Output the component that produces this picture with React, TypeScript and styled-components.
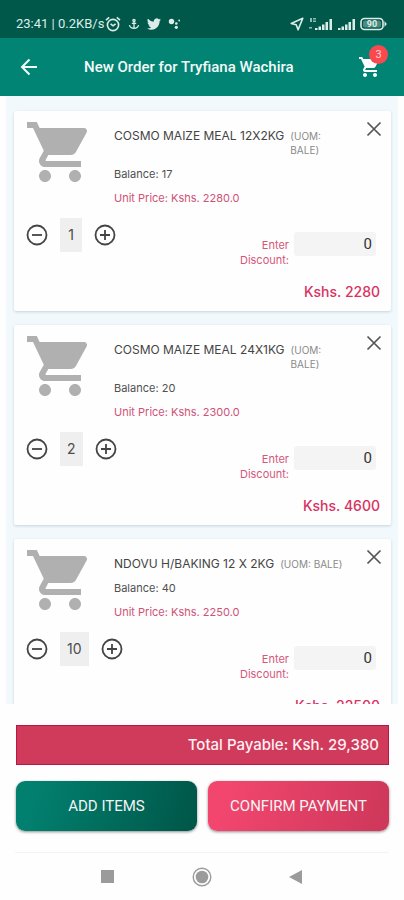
import React, { useState } from "react";
import styled, { createGlobalStyle } from "styled-components";

const GlobalStyle = createGlobalStyle`
  * { box-sizing: border-box; }
  body { margin: 0; background: #fff; font-family: Inter, "Liberation Sans", sans-serif; }
  button, input { font: inherit; }
`;

const Screen = styled.div`
  display: flex;
  flex-direction: column;
  height: 100vh;
  background: #fefefe;
`;

const StatusBar = styled.div`
  display: flex;
  align-items: center;
  justify-content: space-between;
  flex: none;
  height: 38px;
  padding: 10px 17px 0 16px;
  background: #00584a;
  color: #dcece9;
  font-family: Roboto, sans-serif;
  font-size: 13px;
  line-height: 16px;
`;

const StatusGroup = styled.div<{ $gap: number }>`
  display: flex;
  align-items: center;
  gap: ${(p) => p.$gap}px;
  white-space: nowrap;
`;

const AppBar = styled.header`
  display: flex;
  align-items: center;
  flex: none;
  height: 58px;
  padding: 0 20px;
  background: #028475;
  color: #f2faf8;
`;

const IconButton = styled.button<{ $color: string }>`
  display: flex;
  align-items: center;
  justify-content: center;
  flex: none;
  padding: 0;
  border: 0;
  background: none;
  color: ${(p) => p.$color};
  cursor: pointer;
`;

const Heading = styled.h1`
  flex: 1;
  margin: 0 0 0 46px;
  font-family: Roboto, sans-serif;
  font-size: 15px;
  font-weight: 500;
  line-height: 20px;
`;

const CartButton = styled(IconButton)`
  position: relative;
  margin-right: 2px;
`;

const Badge = styled.span`
  position: absolute;
  top: -10px;
  right: -6px;
  width: 19px;
  height: 19px;
  border-radius: 50%;
  background: #f9494f;
  color: #ffd5d5;
  font-family: Roboto, sans-serif;
  font-size: 11px;
  line-height: 19px;
  text-align: center;
`;

const OrderList = styled.main`
  display: flex;
  flex-direction: column;
  gap: 14px;
  flex: 1;
  min-height: 0;
  margin: 0 6px;
  padding: 15px 7px 0 8px;
  overflow-y: auto;
  scrollbar-width: none;
  background: #f2f9fd;
`;

const Card = styled.article`
  flex: none;
  padding: 5px 9px 10px 10px;
  border-radius: 2px;
  background: #fefefe;
  box-shadow: 0 1px 3px #c5d3da;
`;

const CardTop = styled.div`
  display: flex;
  align-items: flex-start;
`;

const Details = styled.div`
  display: flex;
  flex-direction: column;
  flex: 1;
  gap: 10px;
  min-width: 0;
  margin: 0 16px 0 18px;
  padding-top: 13px;
  font-size: 11px;
  line-height: 14px;
`;

const NameRow = styled.div`
  display: flex;
  gap: 6px;
`;

const ProductName = styled.h2`
  margin: 0;
  color: #444;
  font-size: 12px;
  font-weight: 400;
  white-space: nowrap;
`;

const Unit = styled.span`
  color: #8a8a8a;
  font-size: 10px;
`;

const Detail = styled.div<{ $color: string }>`
  color: ${(p) => p.$color};
`;

const RemoveButton = styled(IconButton)`
  margin-top: 5px;
`;

const CardControls = styled.div`
  display: flex;
  align-items: flex-start;
  justify-content: space-between;
  margin-top: 13px;
  padding: 0 6px 0 2px;
`;

const Stepper = styled.div`
  display: flex;
  align-items: center;
  gap: 12px;
`;

const Quantity = styled.output`
  min-width: 22px;
  padding: 0 7px;
  background: #efefef;
  color: #4c4c4c;
  font-size: 14px;
  line-height: 34px;
  text-align: center;
`;

const Discount = styled.label`
  display: flex;
  align-items: flex-start;
  gap: 5px;
  margin-top: 14px;
  color: #d5577c;
  font-size: 11px;
  line-height: 15px;
  text-align: right;
`;

const DiscountText = styled.span`
  width: min-content;
  padding-top: 6px;
`;

const DiscountInput = styled.input`
  width: 82px;
  height: 24px;
  padding: 0 4px;
  border: 0;
  border-radius: 3px;
  background: #f4f4f4;
  color: #333;
  font-family: Roboto, sans-serif;
  font-size: 15px;
  text-align: right;
`;

const Subtotal = styled.div`
  margin-top: 15px;
  padding-right: 2px;
  color: #d8325f;
  font-size: 14px;
  font-weight: 500;
  line-height: 18px;
  text-align: right;
`;

const Footer = styled.footer`
  flex: none;
  padding: 21px 15px 21px 16px;
`;

const Total = styled.div`
  padding: 0 9px;
  border: 1px solid #b91549;
  background: #d03a5b;
  color: #fff0f3;
  font-size: 15px;
  font-weight: 500;
  line-height: 38px;
  text-align: right;
`;

const Actions = styled.div`
  display: grid;
  grid-template-columns: 1fr 1fr;
  gap: 11px;
  margin-top: 16px;
`;

const ActionButton = styled.button<{ $from: string; $to: string }>`
  height: 50px;
  padding: 0;
  border: 0;
  border-radius: 9px;
  background: linear-gradient(105deg, ${(p) => p.$from} 10%, ${(p) => p.$to} 95%);
  box-shadow: 0 1px 3px #8c8c8c;
  color: #f4f4f4;
  font-family: Roboto, sans-serif;
  font-size: 15px;
  cursor: pointer;
`;

const SystemNav = styled.nav`
  display: flex;
  align-items: center;
  justify-content: space-between;
  flex: none;
  height: 48px;
  margin: 0 15px;
  padding: 0 87px 0 86px;
  border-top: 1px solid #f3f3f3;
`;

const AlarmIcon = () => (
  <svg width="16" height="16" viewBox="0 0 16 16" fill="none" stroke="currentColor" strokeWidth="1.6" aria-hidden="true">
    <circle cx="8" cy="9" r="5.6" />
    <path d="M1 4.2 4.2 1.4M15 4.2 11.8 1.4M5.6 7.8 8 9.8l2.6-2" />
  </svg>
);

const AnchorIcon = () => (
  <svg width="12" height="12" viewBox="0 0 12 12" fill="none" stroke="currentColor" strokeWidth="1.3" aria-hidden="true">
    <circle cx="6" cy="2.4" r="1.1" />
    <path d="M6 3.5V10M3.8 5.3h4.4M1.4 7.2C2 9.4 3.7 10.4 6 10.4s4-1 4.6-3.2" />
  </svg>
);

const BirdIcon = () => (
  <svg width="14" height="14" viewBox="0 0 24 24" fill="currentColor" aria-hidden="true">
    <path d="M23.95 4.57a10 10 0 0 1-2.82.77 4.96 4.96 0 0 0 2.16-2.72 9.9 9.9 0 0 1-3.12 1.19 4.92 4.92 0 0 0-8.39 4.48A13.9 13.9 0 0 1 1.64 3.16a4.92 4.92 0 0 0 1.52 6.57 4.9 4.9 0 0 1-2.23-.61v.06a4.92 4.92 0 0 0 3.95 4.83 5 5 0 0 1-2.21.08 4.94 4.94 0 0 0 4.6 3.42A9.87 9.87 0 0 1 0 19.54a14 14 0 0 0 7.55 2.21c9.05 0 14-7.5 14-13.98l-.02-.64a10 10 0 0 0 2.42-2.56z" />
  </svg>
);

const DotsIcon = () => (
  <svg width="13" height="12" viewBox="0 0 13 12" fill="currentColor" aria-hidden="true">
    <circle cx="3.5" cy="3.5" r="2.7" />
    <circle cx="8.3" cy="5.5" r="1.3" />
    <circle cx="8.3" cy="9.3" r="1.6" />
    <circle cx="11.2" cy="2.5" r=".9" />
  </svg>
);

const LocationIcon = () => (
  <svg width="14" height="14" viewBox="0 0 14 14" fill="none" stroke="currentColor" strokeWidth="1.6" strokeLinejoin="round" aria-hidden="true">
    <path d="M12.8 1.2 1.2 6.4l5 1.4 1.9 5z" />
  </svg>
);

const SignalIcon = ({ tagged = false }: { tagged?: boolean }) => (
  <svg width={tagged ? 25 : 19} height="14" viewBox={tagged ? "-6 0 25 14" : "0 0 19 14"} fill="currentColor" aria-hidden="true">
    <path d="M1 11h2.5v2H1zM4.5 9.5H7V13H4.500zM8 7.500h2.500V13H8zM11.500 5H14v8h-2.500zM15.500 2H18v11h-2.500z" />
    {tagged && <path opacity=".65" d="M-4 1h2v4h-2zM-1 1h3v1.500h-3zM-1 3.500h3V5h-3zM-5 10h3v1.500h-3z" />}
  </svg>
);

const BatteryIcon = () => (
  <svg width="27" height="14" viewBox="0 0 27 14" aria-hidden="true">
    <rect x="1" y="1.5" width="22" height="11" rx="3.5" fill="none" stroke="currentColor" strokeWidth="1.6" />
    <path d="M24.5 4 26.800 7l-2.300 3z" fill="currentColor" />
    <rect x="3" y="3.5" width="18" height="7" rx="2" fill="currentColor" opacity=".35" />
    <text x="12" y="10.2" textAnchor="middle" fontFamily="Roboto, sans-serif" fontSize="9" fontWeight="700" fill="currentColor">90</text>
  </svg>
);

const BackIcon = () => (
  <svg width="18" height="18" viewBox="0 0 18 18" fill="none" stroke="currentColor" strokeWidth="2" aria-hidden="true">
    <path d="M17 9H2.5M9.5 1.5 2 9l7.5 7.5" />
  </svg>
);

const CartIcon = ({ size }: { size: number }) => (
  <svg width={size} height={size} viewBox="0 0 24 24" fill="currentColor" aria-hidden="true">
    <path d="M7 18c-1.1 0-1.99.9-1.99 2S5.9 22 7 22s2-.9 2-2-.9-2-2-2zM1 2v2h2l3.6 7.59-1.35 2.45c-.16.28-.25.61-.25.96 0 1.1.9 2 2 2h12v-2H7.42c-.14 0-.25-.11-.25-.25l.03-.12.9-1.63h7.45c.75 0 1.41-.41 1.75-1.03l3.58-6.49A1 1 0 0 0 20 4H5.21l-.94-2H1zm16 16c-1.1 0-1.99.9-1.99 2s.89 2 1.99 2 2-.9 2-2-.9-2-2-2z" />
  </svg>
);

const StepIcon = ({ plus = false }: { plus?: boolean }) => (
  <svg width="22" height="22" viewBox="0 0 22 22" fill="none" stroke="currentColor" strokeWidth="1.8" aria-hidden="true">
    <circle cx="11" cy="11" r="9.5" />
    <path d={plus ? "M6 11h10M11 6v10" : "M6 11h10"} />
  </svg>
);

const CloseIcon = () => (
  <svg width="16" height="16" viewBox="0 0 16 16" fill="none" stroke="currentColor" strokeWidth="1.7" aria-hidden="true">
    <path d="m1.500 1.500 13 13M14.500 1.500l-13 13" />
  </svg>
);

const Thumbnail = styled.div`
  display: flex;
  flex: none;
  color: #b0b0b0;
`;

interface Item {
  name: string;
  unit: string;
  balance: number;
  price: number;
  quantity: number;
}

const initialItems: Item[] = [
  { name: "COSMO MAIZE MEAL 12X2KG", unit: "BALE", balance: 17, price: 2280, quantity: 1 },
  { name: "COSMO MAIZE MEAL 24X1KG", unit: "BALE", balance: 20, price: 2300, quantity: 2 },
  { name: "NDOVU H/BAKING 12 X 2KG", unit: "BALE", balance: 40, price: 2250, quantity: 10 },
];

interface OrderCardProps {
  item: Item;
  onQuantity: (quantity: number) => void;
  onRemove: () => void;
}

function OrderCard({ item, onQuantity, onRemove }: OrderCardProps) {
  return (
    <Card>
      <CardTop>
        <Thumbnail><CartIcon size={72} /></Thumbnail>
        <Details>
          <NameRow>
            <ProductName>{item.name}</ProductName>
            <Unit>(UOM: {item.unit})</Unit>
          </NameRow>
          <Detail $color="#505050">Balance: {item.balance}</Detail>
          <Detail $color="#cf5277">Unit Price: Kshs. {item.price.toFixed(1)}</Detail>
        </Details>
        <RemoveButton $color="#555" aria-label={`Remove ${item.name}`} onClick={onRemove}>
          <CloseIcon />
        </RemoveButton>
      </CardTop>
      <CardControls>
        <Stepper>
          <IconButton $color="#444" aria-label="Decrease quantity" onClick={() => onQuantity(Math.max(1, item.quantity - 1))}>
            <StepIcon />
          </IconButton>
          <Quantity>{item.quantity}</Quantity>
          <IconButton $color="#444" aria-label="Increase quantity" onClick={() => onQuantity(item.quantity + 1)}>
            <StepIcon plus />
          </IconButton>
        </Stepper>
        <Discount>
          <DiscountText>Enter Discount:</DiscountText>
          <DiscountInput inputMode="numeric" defaultValue="0" />
        </Discount>
      </CardControls>
      <Subtotal>Kshs. {item.price * item.quantity}</Subtotal>
    </Card>
  );
}

export default function App() {
  const [items, setItems] = useState(initialItems);
  const total = items.reduce((sum, item) => sum + item.price * item.quantity, 0);

  return (
    <>
      <GlobalStyle />
      <Screen>
        <StatusBar>
          <StatusGroup $gap={7}>
            <StatusGroup $gap={1}>
              <span>23:41 | 0.2KB/s</span>
              <AlarmIcon />
            </StatusGroup>
            <AnchorIcon />
            <BirdIcon />
            <DotsIcon />
          </StatusGroup>
          <StatusGroup $gap={4}>
            <LocationIcon />
            <SignalIcon tagged />
            <SignalIcon />
            <BatteryIcon />
          </StatusGroup>
        </StatusBar>
        <AppBar>
          <IconButton $color="#f2faf8" aria-label="Back"><BackIcon /></IconButton>
          <Heading>New Order for Tryfiana Wachira</Heading>
          <CartButton $color="#fff" aria-label="Cart">
            <CartIcon size={24} />
            <Badge>{items.length}</Badge>
          </CartButton>
        </AppBar>
        <OrderList>
          {items.map((item) => (
            <OrderCard
              key={item.name}
              item={item}
              onQuantity={(quantity) =>
                setItems(items.map((other) => (other === item ? { ...item, quantity } : other)))
              }
              onRemove={() => setItems(items.filter((other) => other !== item))}
            />
          ))}
        </OrderList>
        <Footer>
          <Total>Total Payable: Ksh. {total.toLocaleString("en-US")}</Total>
          <Actions>
            <ActionButton $from="#02806f" $to="#00584a">ADD ITEMS</ActionButton>
            <ActionButton $from="#f2466f" $to="#cf385a">CONFIRM PAYMENT</ActionButton>
          </Actions>
        </Footer>
        <SystemNav aria-label="System">
          <IconButton $color="#9b9b9b" aria-label="Recent apps">
            <svg width="13" height="13" viewBox="0 0 13 13" aria-hidden="true"><path fill="currentColor" d="M0 0h13v13H0z" /></svg>
          </IconButton>
          <IconButton $color="#9b9b9b" aria-label="Home">
            <svg width="20" height="20" viewBox="0 0 20 20" aria-hidden="true">
              <circle cx="10" cy="10" r="8.8" fill="none" stroke="currentColor" strokeWidth="1.4" />
              <circle cx="10" cy="10" r="6.3" fill="currentColor" />
            </svg>
          </IconButton>
          <IconButton $color="#9b9b9b" aria-label="Go back">
            <svg width="13" height="14" viewBox="0 0 13 14" aria-hidden="true"><path fill="currentColor" d="M13 0v14L0 7z" /></svg>
          </IconButton>
        </SystemNav>
      </Screen>
    </>
  );
}
